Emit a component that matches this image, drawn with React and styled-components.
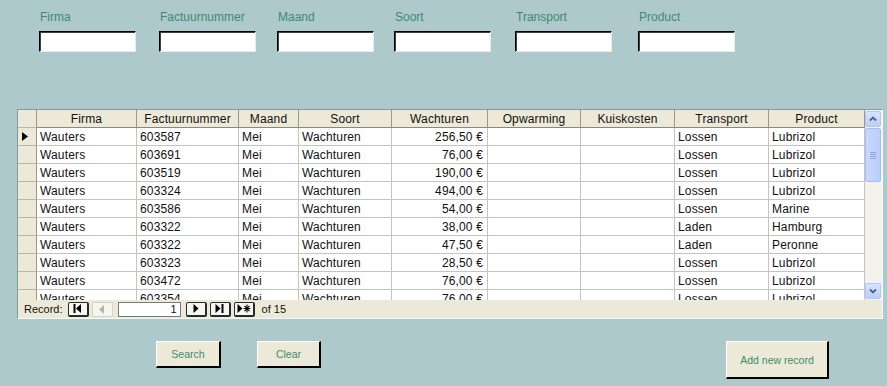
import React from 'react';
import styled, { createGlobalStyle } from 'styled-components';

const Global = createGlobalStyle`
  html, body { margin: 0; padding: 0; background: #aec9cc; }
  body { font-family: "Liberation Sans", Arial, sans-serif; }
`;

const Page = styled.div`
  width: 887px;
  height: 386px;
  overflow: hidden;
  background: #aec9cc;
  display: flex;
  flex-direction: column;
`;

const Filters = styled.div`
  display: grid;
  grid-template-columns: 120px 118px 117px 121px 123px 97px;
  padding: 10px 0 0 39px;
`;

const Field = styled.div`
  display: flex;
  flex-direction: column;
  gap: 7px;
  width: 97px;
`;

const Label = styled.label`
  font-size: 12px;
  line-height: 14px;
  color: #3d8b6d;
  padding-left: 1px;
`;

const Input = styled.input`
  box-sizing: border-box;
  width: 97px;
  height: 21px;
  margin: 0;
  padding: 0 3px;
  background: #fff;
  border: 1px solid;
  border-color: #000 #e4ecec #e4ecec #000;
  box-shadow: inset 1px 1px 0 #404040;
  outline: none;
`;

const Sheet = styled.div`
  margin: 57px 0 0 17px;
  width: 866px;
  box-sizing: border-box;
  border: 1px solid;
  border-color: #7f9da0 #f4f8f8 #f4f8f8 #7f9da0;
  background: #fff;
  display: flex;
  flex-direction: column;
`;

const SheetBody = styled.div`
  display: flex;
  height: 190px;
`;

const Grid = styled.div`
  width: 847px;
  overflow: hidden;
`;

const COLS = '19px 100px 102px 60px 93px 96px 93px 94px 94px 96px';

const Row = styled.div`
  display: grid;
  grid-template-columns: ${COLS};
  height: 18px;
`;

const Cell = styled.div`
  box-sizing: border-box;
  border-right: 1px solid #c4c4c4;
  border-bottom: 1px solid #c4c4c4;
  font-size: 12px;
  line-height: 18px;
  padding: ${p => (p.$right ? '0 4px 0 3px' : '0 0 0 3px')};
  text-align: ${p => (p.$right ? 'right' : 'left')};
  white-space: nowrap;
  overflow: hidden;
  color: #111;
  background: #fff;
  letter-spacing: 0.15px;
`;

const HeadCell = styled(Cell)`
  background: #ece9d8;
  text-align: center;
  padding: 0;
  border-right-color: #9a9888;
  border-bottom-color: #8a8878;
`;

const Selector = styled.div`
  box-sizing: border-box;
  background: #ece9d8;
  border-right: 1px solid #9a9888;
  border-bottom: 1px solid #b8b6a8;
  display: flex;
  align-items: center;
  padding-left: 4px;
`;

const VScroll = styled.div`
  width: 17px;
  box-sizing: border-box;
  display: flex;
  flex-direction: column;
  background: #f3f2ed;
  padding: 1px 1px 1px 0;
`;

const ScrollBtn = styled.div`
  height: 16px;
  box-sizing: border-box;
  border: 1px solid #b4c6f2;
  border-radius: 2px;
  background: linear-gradient(#d6e2fe, #bccdf8);
  display: flex;
  align-items: center;
  justify-content: center;
`;

const Thumb = styled.div`
  margin-top: 1px;
  height: 54px;
  box-sizing: border-box;
  border: 1px solid #a9bdf0;
  border-radius: 2px;
  background: linear-gradient(90deg, #c9d8fd, #bccdfa);
  display: flex;
  flex-direction: column;
  align-items: center;
  justify-content: center;
  gap: 1px;
`;

const Grip = styled.div`
  width: 6px;
  height: 1px;
  background: #8fa6e0;
`;

const Track = styled.div`
  flex: 1;
`;

const Nav = styled.div`
  height: 18px;
  background: #ece9d8;
  display: flex;
  align-items: center;
  padding-left: 6px;
  font-size: 11px;
  color: #111;
`;

const NavText = styled.span`
  margin-right: ${p => p.$mr || 0}px;
`;

const NavBtn = styled.div`
  box-sizing: border-box;
  width: 21px;
  height: 15px;
  margin-right: ${p => p.$mr || 0}px;
  border: 1px solid ${p => (p.$disabled ? '#d8d5c8' : '#2a2a2a')};
  border-right-width: ${p => (p.$disabled ? 1 : 2)}px;
  border-bottom-width: ${p => (p.$disabled ? 1 : 2)}px;
  border-radius: 2px;
  background: #f6f5f0;
  display: flex;
  align-items: center;
  justify-content: center;
`;

const RecordBox = styled.div`
  box-sizing: border-box;
  width: 63px;
  height: 15px;
  margin-right: 5px;
  background: #fff;
  border: 1px solid #7a7a7a;
  font-size: 11px;
  line-height: 13px;
  text-align: right;
  padding-right: 3px;
`;

const Actions = styled.div`
  display: flex;
  align-items: flex-start;
  margin-top: 22px;
  padding: 0 58px 0 156px;
`;

const Button = styled.button`
  box-sizing: border-box;
  width: ${p => p.$w}px;
  height: ${p => p.$h}px;
  margin: 0 0 0 ${p => p.$ml || 0}px;
  padding: 0;
  border: 1px solid;
  border-color: #fff #000 #000 #fff;
  border-right-width: 2px;
  border-bottom-width: 2px;
  background: #ece9d8;
  color: #3d8b6d;
  font-family: "Liberation Sans", Arial, sans-serif;
  font-size: 10.5px;
  cursor: pointer;
`;

const Spacer = styled.div`
  flex: 1;
`;

const headers = ['Firma', 'Factuurnummer', 'Maand', 'Soort', 'Wachturen', 'Opwarming', 'Kuiskosten', 'Transport', 'Product'];

const rows = [
  ['603587', '256,50 €', 'Lossen', 'Lubrizol'],
  ['603691', '76,00 €', 'Lossen', 'Lubrizol'],
  ['603519', '190,00 €', 'Lossen', 'Lubrizol'],
  ['603324', '494,00 €', 'Lossen', 'Lubrizol'],
  ['603586', '54,00 €', 'Lossen', 'Marine'],
  ['603322', '38,00 €', 'Laden', 'Hamburg'],
  ['603322', '47,50 €', 'Laden', 'Peronne'],
  ['603323', '28,50 €', 'Lossen', 'Lubrizol'],
  ['603472', '76,00 €', 'Lossen', 'Lubrizol'],
  ['603354', '76,00 €', 'Lossen', 'Lubrizol'],
];

const filters = ['Firma', 'Factuurnummer', 'Maand', 'Soort', 'Transport', 'Product'];

const Arrow = () => (
  <svg width="6" height="9" viewBox="0 0 6 9"><path d="M0 0 L6 4.5 L0 9 Z" fill="#000" /></svg>
);

const FirstIcon = () => (
  <svg width="9" height="9" viewBox="0 0 9 9"><rect x="0.5" y="0" width="2" height="9" fill="#000" /><path d="M8 0 L3 4.5 L8 9 Z" fill="#000" /></svg>
);
const PrevIcon = () => (
  <svg width="6" height="9" viewBox="0 0 6 9"><path d="M5 0 L0 4.5 L5 9 Z" fill="#b8b5a8" /></svg>
);
const NextIcon = () => (
  <svg width="6" height="9" viewBox="0 0 6 9"><path d="M0.5 0 L5.5 4.5 L0.5 9 Z" fill="#000" /></svg>
);
const LastIcon = () => (
  <svg width="9" height="9" viewBox="0 0 9 9"><path d="M0.5 0 L5.5 4.5 L0.5 9 Z" fill="#000" /><rect x="6.5" y="0" width="2" height="9" fill="#000" /></svg>
);
const NewIcon = () => (
  <svg width="14" height="9" viewBox="0 0 14 9">
    <path d="M0.5 0 L5.5 4.5 L0.5 9 Z" fill="#000" />
    <path d="M10 0.5 V8.5 M6.5 4.5 H13.5 M7.5 1.8 L12.5 7.2 M12.5 1.8 L7.5 7.2" stroke="#000" strokeWidth="1.1" />
  </svg>
);

const Chevron = ({ down }) => (
  <svg width="8" height="6" viewBox="0 0 8 6">
    <path d={down ? 'M1 1.5 L4 4.5 L7 1.5' : 'M1 4.5 L4 1.5 L7 4.5'} fill="none" stroke="#4d6185" strokeWidth="1.8" />
  </svg>
);

export default function App() {
  return (
    <Page>
      <Global />
      <Filters>
        {filters.map(f => (
          <Field key={f}>
            <Label>{f}</Label>
            <Input />
          </Field>
        ))}
      </Filters>

      <Sheet>
        <SheetBody>
          <Grid>
            <Row>
              <Selector />
              {headers.map(h => (
                <HeadCell key={h}>{h}</HeadCell>
              ))}
            </Row>
            {rows.map((r, i) => (
              <Row key={i}>
                <Selector>{i === 0 && <Arrow />}</Selector>
                <Cell>Wauters</Cell>
                <Cell>{r[0]}</Cell>
                <Cell>Mei</Cell>
                <Cell>Wachturen</Cell>
                <Cell $right>{r[1]}</Cell>
                <Cell />
                <Cell />
                <Cell>{r[2]}</Cell>
                <Cell>{r[3]}</Cell>
              </Row>
            ))}
          </Grid>
          <VScroll>
            <ScrollBtn><Chevron /></ScrollBtn>
            <Thumb><Grip /><Grip /><Grip /><Grip /></Thumb>
            <Track />
            <ScrollBtn><Chevron down /></ScrollBtn>
          </VScroll>
        </SheetBody>
        <Nav>
          <NavText $mr={5}>Record:</NavText>
          <NavBtn $mr={3}><FirstIcon /></NavBtn>
          <NavBtn $mr={5} $disabled><PrevIcon /></NavBtn>
          <RecordBox>1</RecordBox>
          <NavBtn $mr={3}><NextIcon /></NavBtn>
          <NavBtn $mr={3}><LastIcon /></NavBtn>
          <NavBtn $mr={7}><NewIcon /></NavBtn>
          <NavText>of 15</NavText>
        </Nav>
      </Sheet>

      <Actions>
        <Button $w={65} $h={27}>Search</Button>
        <Button $w={64} $h={27} $ml={36}>Clear</Button>
        <Spacer />
        <Button $w={103} $h={38}>Add new record</Button>
      </Actions>
    </Page>
  );
}
